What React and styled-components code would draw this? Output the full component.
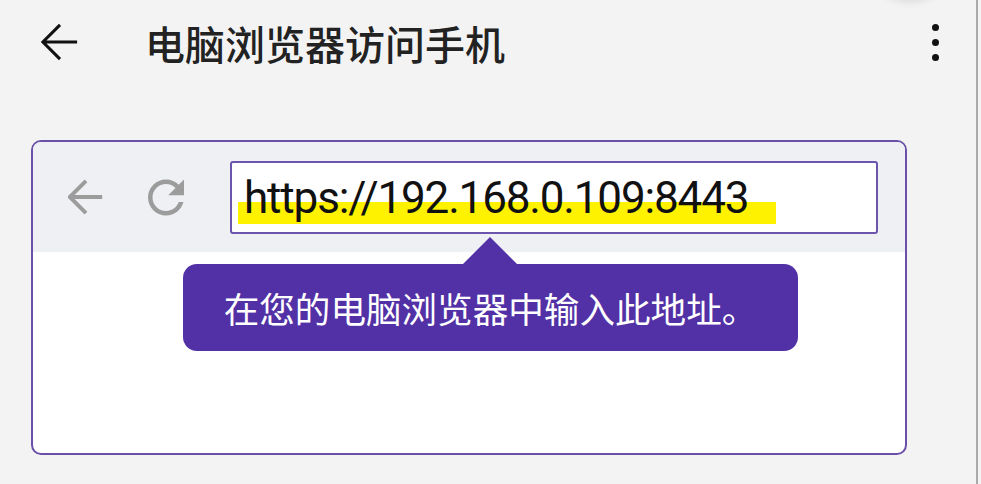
import React from "react";
import styled, { createGlobalStyle } from "styled-components";

const Global = createGlobalStyle`
  html, body { margin: 0; padding: 0; background: #f3f3f3; }
  body { font-family: "Noto Sans CJK SC", "Noto Sans", sans-serif; }
`;

const Screen = styled.div`
  position: relative;
  width: 976px;
  height: 484px;
  background: #f3f3f3;
  border-right: 2px solid #a9a9a9;
  display: flex;
  flex-direction: column;
  overflow: hidden;
`;

const Glow = styled.div`
  position: absolute;
  top: -70px;
  left: 870px;
  width: 80px;
  height: 70px;
  border-radius: 50%;
  box-shadow: 0 2px 8px rgba(0, 0, 0, 0.1);
`;

const Header = styled.header`
  height: 84px;
  display: flex;
  align-items: center;
  padding-left: 41px;
  padding-right: 37px;
`;

const IconButton = styled.button`
  border: 0;
  background: none;
  padding: 0;
  display: flex;
  align-items: center;
  justify-content: center;
  width: ${(p) => p.$w}px;
  height: ${(p) => p.$h}px;
  color: ${(p) => p.$color};
`;

const Title = styled.h1`
  margin: 0 0 0 66px;
  flex: 1;
  font-family: "Noto Sans CJK SC", sans-serif;
  font-weight: 500;
  font-size: 40px;
  line-height: 1;
  color: #222;
  padding-top: 1px;
`;

const Kebab = styled.div`
  display: flex;
  flex-direction: column;
  gap: 8px;
  align-items: center;
  width: 8px;
`;

const Dot = styled.span`
  width: 7px;
  height: 7px;
  border-radius: 50%;
  background: #111;
`;

const Card = styled.section`
  margin: 56px 0 0 31px;
  width: 872px;
  height: 311px;
  border: 2px solid #6a50a8;
  border-radius: 10px;
  background: #fff;
  display: flex;
  flex-direction: column;
`;

const Toolbar = styled.div`
  height: 110px;
  background: #eff0f4;
  border-radius: 8px 8px 0 0;
  display: flex;
  align-items: center;
  padding-left: 35px;
`;

const NavGroup = styled.div`
  display: flex;
  align-items: center;
  gap: 44px;
  margin-right: 46px;
`;

const UrlBox = styled.div`
  box-sizing: border-box;
  width: 648px;
  height: 73px;
  border: 2px solid #6b55ad;
  border-radius: 3px;
  background: #fff;
  display: flex;
  align-items: flex-start;
  padding: 13px 0 0 6px;
`;

const UrlText = styled.span`
  display: inline-block;
  font-family: Roboto, "Liberation Sans", sans-serif;
  font-size: 44px;
  line-height: 44px;
  letter-spacing: -1.15px;
  color: #111;
  padding: 0 28px 4px 6px;
  background: linear-gradient(to bottom, transparent 26px, #fef200 26px);
`;

const Body = styled.div`
  flex: 1;
  padding: 12px 0 0 150px;
`;

const Tooltip = styled.div`
  position: relative;
  width: 615px;
  height: 87px;
  box-sizing: border-box;
  border-radius: 14px;
  background: #5230a5;
  color: #fff;
  display: flex;
  align-items: center;
  justify-content: center;
  padding-left: 0;
  font-family: "Noto Sans CJK SC", sans-serif;
  font-size: 35.6px;

  &::before {
    content: "";
    position: absolute;
    left: 279px;
    top: -27px;
    border-left: 28px solid transparent;
    border-right: 28px solid transparent;
    border-bottom: 28px solid #5230a5;
  }
`;

const BackIcon = ({ color, sw, size }) => (
  <svg width={size} height={size} viewBox="0 0 40 40" fill="none">
    <path d="M38 20H3M20 2L2 20L20 38" stroke={color} strokeWidth={sw} />
  </svg>
);

const RefreshIcon = () => (
  <svg width="37" height="37" viewBox="4 4 16 16" fill="#9c9c9c">
    <path d="M17.65 6.35C16.2 4.9 14.21 4 12 4c-4.42 0-7.99 3.58-7.99 8s3.57 8 7.99 8c3.730 0 6.84-2.55 7.73-6h-2.08c-.82 2.33-3.04 4-5.65 4-3.31 0-6-2.69-6-6s2.69-6 6-6c1.66 0 3.14.69 4.22 1.78L13 11h7V4l-2.35 2.35z" />
  </svg>
);

export default function App() {
  return (
    <>
      <Global />
      <Screen>
        <Glow />
        <Header>
          <IconButton $w={38} $h={40} $color="#111">
            <BackIcon color="#111" sw={3.2} size={40} />
          </IconButton>
          <Title>电脑浏览器访问手机</Title>
          <Kebab>
            <Dot />
            <Dot />
            <Dot />
          </Kebab>
        </Header>
        <Card>
          <Toolbar>
            <NavGroup>
              <IconButton $w={36} $h={36} $color="#9c9c9c">
                <BackIcon color="#9c9c9c" sw={4.4} size={36} />
              </IconButton>
              <IconButton $w={36} $h={36} $color="#9c9c9c">
                <RefreshIcon />
              </IconButton>
            </NavGroup>
            <UrlBox>
              <UrlText>https://192.168.0.109:8443</UrlText>
            </UrlBox>
          </Toolbar>
          <Body>
            <Tooltip>在您的电脑浏览器中输入此地址。</Tooltip>
          </Body>
        </Card>
      </Screen>
    </>
  );
}
